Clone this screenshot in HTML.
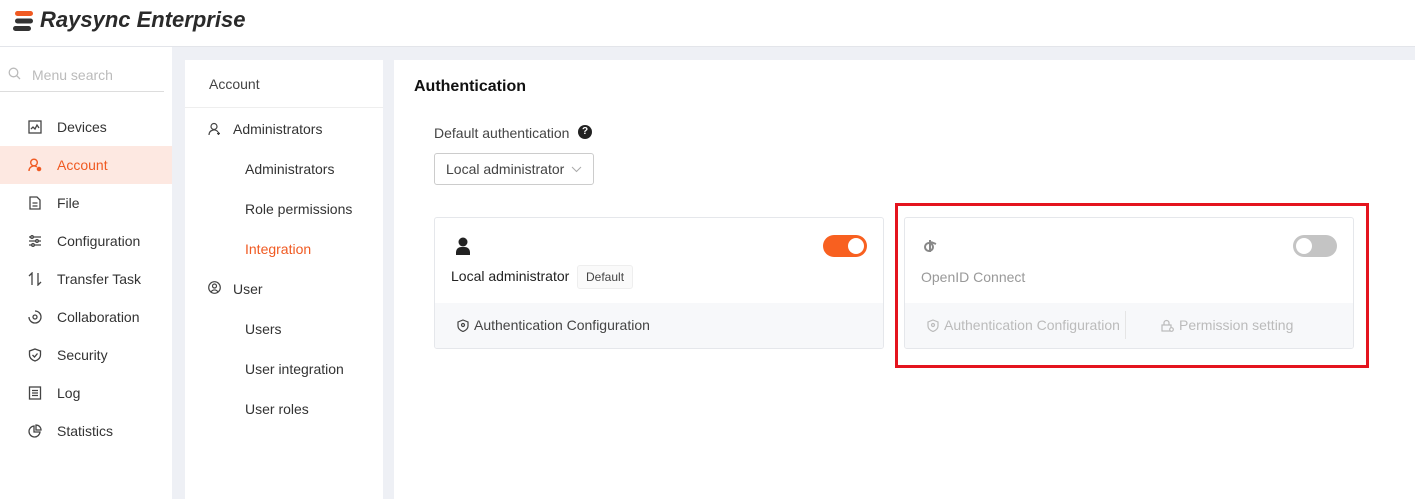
<html><head><style>
body{margin:0;width:1415px;height:499px;background:#eef0f5;font-family:"Liberation Sans",sans-serif;position:relative;overflow:hidden;font-size:14px;color:#333}
.a{position:absolute}
.hd{left:0;top:0;width:1415px;height:46px;background:#fff;border-bottom:1px solid #e3e5ea}
.sb{left:0;top:47px;width:172px;height:452px;background:#fff}
.mi{position:absolute;left:0;width:172px;height:38px;line-height:38px}
.mi span{position:absolute;left:57px}
.mi svg{position:absolute;left:28px;top:12px}
.mp{left:185px;top:60px;width:198px;height:439px;background:#fff}
.rp{left:394px;top:60px;width:1021px;height:439px;background:#fff}
.card{position:absolute;top:217px;width:450px;height:132px;border:1px solid #e5e7eb;border-radius:3px;background:#fff;box-sizing:border-box;overflow:hidden}
.ft{position:absolute;left:0;right:0;bottom:0;height:45px;background:#f7f8fa;line-height:45px}
</style></head><body>
<div class="a hd">
<svg class="a" style="left:12px;top:10px" width="24" height="22" viewBox="0 0 24 22"><rect x="3" y="1" width="18" height="5" rx="2.5" fill="#f05a22"/><rect x="3" y="8.5" width="18" height="5" rx="2.5" fill="#333"/><rect x="1" y="16" width="18" height="5" rx="2.5" fill="#333"/></svg>
<div class="a" style="left:40px;top:7px;font-size:22px;font-weight:bold;font-style:italic;color:#2a2a2a">Raysync Enterprise</div>
</div>
<div class="a sb">
<svg class="a" style="left:8px;top:20px" width="13" height="13" viewBox="0 0 13 13"><circle cx="5.5" cy="5.5" r="4.3" fill="none" stroke="#bbb" stroke-width="1.3"/><path d="M8.7 8.7l3.3 3.3" stroke="#bbb" stroke-width="1.3"/></svg>
<div class="a" style="left:32px;top:20px;color:#bbb;font-size:14px">Menu search</div>
<div class="a" style="left:0;top:44px;width:164px;border-top:1px solid #ddd"></div>
<div class="mi" style="top:61px"><svg width="14" height="14" viewBox="0 0 14 14" fill="none" stroke="#444" stroke-width="1.3"><rect x="1" y="1" width="12" height="12"/><path d="M3 9l2-2 2 2 2-4 2 3"/></svg><span>Devices</span></div>
<div class="mi" style="top:99px;background:#fde8e1;color:#f05a22"><svg width="14" height="14" viewBox="0 0 14 14" fill="none" stroke="#f05a22" stroke-width="1.4"><circle cx="6" cy="4.5" r="3.3"/><path d="M1 13a5 5 0 0 1 8-4"/><circle cx="11" cy="11" r="1.6" fill="#f05a22"/></svg><span>Account</span></div>
<div class="mi" style="top:137px"><svg width="14" height="14" viewBox="0 0 14 14" fill="none" stroke="#444" stroke-width="1.3"><path d="M2 1h7l3 3v9H2zM4.5 7h5M4.5 10h5"/></svg><span>File</span></div>
<div class="mi" style="top:175px"><svg width="14" height="14" viewBox="0 0 14 14" fill="none" stroke="#444" stroke-width="1.3"><path d="M1 3h12M1 7h12M1 11h12"/><circle cx="4" cy="3" r="1.3" fill="#fff"/><circle cx="9" cy="7" r="1.3" fill="#fff"/><circle cx="5" cy="11" r="1.3" fill="#fff"/></svg><span>Configuration</span></div>
<div class="mi" style="top:213px"><svg width="14" height="14" viewBox="0 0 14 14" fill="none" stroke="#444" stroke-width="1.3"><path d="M4 13V1L1 4M10 1v12l3-3"/></svg><span>Transfer Task</span></div>
<div class="mi" style="top:251px"><svg width="14" height="14" viewBox="0 0 14 14" fill="none" stroke="#444" stroke-width="1.3"><path d="M7 1a6 6 0 1 1-6 6"/><circle cx="7" cy="7" r="2"/></svg><span>Collaboration</span></div>
<div class="mi" style="top:289px"><svg width="14" height="14" viewBox="0 0 14 14" fill="none" stroke="#444" stroke-width="1.3"><path d="M7 1l5.5 2v4c0 3-2.5 5-5.5 6-3-1-5.5-3-5.5-6V3z"/><path d="M4.5 7l2 2 3-3.5"/></svg><span>Security</span></div>
<div class="mi" style="top:327px"><svg width="14" height="14" viewBox="0 0 14 14" fill="none" stroke="#444" stroke-width="1.3"><rect x="1.5" y="1" width="11" height="12"/><path d="M4 4.5h6M4 7h6M4 9.5h6"/></svg><span>Log</span></div>
<div class="mi" style="top:365px"><svg width="14" height="14" viewBox="0 0 14 14" fill="none" stroke="#444" stroke-width="1.3"><path d="M6 2a5.5 5.5 0 1 0 6 6H6z"/><path d="M8 1v5h5A5 5 0 0 0 8 1z"/></svg><span>Statistics</span></div>
</div>
<div class="a mp">
<div class="a" style="left:24px;top:16px;color:#444">Account</div>
<div class="a" style="left:0;top:47px;width:198px;border-top:1px solid #eee"></div>
<svg class="a" style="left:23px;top:62px" width="14" height="14" viewBox="0 0 14 14" fill="none" stroke="#444" stroke-width="1.2"><circle cx="6" cy="4.5" r="3"/><path d="M1 13a5 5 0 0 1 9-3"/><path d="M10.5 10v3M9 11.5h3"/></svg>
<div class="a" style="left:48px;top:61px">Administrators</div>
<div class="a" style="left:60px;top:101px">Administrators</div>
<div class="a" style="left:60px;top:141px">Role permissions</div>
<div class="a" style="left:60px;top:181px;color:#f05a22">Integration</div>
<svg class="a" style="left:23px;top:221px" width="13" height="13" viewBox="0 0 13 13" fill="none" stroke="#444" stroke-width="1.2"><circle cx="6.5" cy="6.5" r="5.8"/><circle cx="6.5" cy="5" r="2"/><path d="M3 11a4 4 0 0 1 7 0"/></svg>
<div class="a" style="left:48px;top:221px">User</div>
<div class="a" style="left:60px;top:261px">Users</div>
<div class="a" style="left:60px;top:301px">User integration</div>
<div class="a" style="left:60px;top:341px">User roles</div>
</div>
<div class="a rp">
<div class="a" style="left:20px;top:18px;font-size:16px;font-weight:bold;color:#111">Authentication</div>
<div class="a" style="left:40px;top:65px;color:#444">Default authentication</div>
<div class="a" style="left:184px;top:65px;width:14px;height:14px;border-radius:50%;background:#222;color:#fff;font-size:10px;text-align:center;line-height:14px;font-weight:bold">?</div>
<div class="a" style="left:40px;top:93px;width:160px;height:32px;border:1px solid #ccc;border-radius:3px;line-height:30px;box-sizing:border-box;padding-left:11px;color:#444">Local administrator</div>
<svg class="a" style="left:177px;top:106px" width="11" height="7" viewBox="0 0 11 7"><path d="M1 1l4.5 4.5L10 1" fill="none" stroke="#aaa" stroke-width="1"/></svg>
</div>
<div class="card" style="left:434px">
<svg class="a" style="left:21px;top:19px" width="14" height="18" viewBox="0 0 14 18"><circle cx="7" cy="5" r="4.5" fill="#222"/><path d="M0 18v-3a5 5 0 0 1 5-5h4a5 5 0 0 1 5 5v3z" fill="#222"/></svg>
<div class="a" style="left:388px;top:17px;width:44px;height:22px;border-radius:11px;background:#f86020"><div class="a" style="right:3px;top:3px;width:16px;height:16px;border-radius:50%;background:#fff"></div></div>
<div class="a" style="left:16px;top:50px;color:#222">Local administrator</div>
<div class="a" style="left:142px;top:47px;height:22px;line-height:22px;padding:0 8px;border:1px solid #eee;background:#fafafa;border-radius:3px;font-size:12px;color:#444">Default</div>
<div class="ft"><svg class="a" style="left:22px;top:16px" width="12" height="13" viewBox="0 0 12 13" fill="none" stroke="#444" stroke-width="1.2"><path d="M6 1l5 2v4c0 3-2.5 4.5-5 5.5C3.5 11.5 1 10 1 7V3z"/><circle cx="6" cy="6" r="1.5"/></svg><span style="position:absolute;left:39px;color:#444">Authentication Configuration</span></div>
</div>
<div class="card" style="left:904px;color:#aaa">
<svg class="a" style="left:18px;top:21px" width="18" height="14" viewBox="0 0 18 14" fill="none" stroke="#888" stroke-width="2"><circle cx="6" cy="8" r="4"/><path d="M7 1v12M8 3l5 2"/></svg>
<div class="a" style="left:388px;top:17px;width:44px;height:22px;border-radius:11px;background:#c4c4c4"><div class="a" style="left:3px;top:3px;width:16px;height:16px;border-radius:50%;background:#fff"></div></div>
<div class="a" style="left:16px;top:51px;color:#999">OpenID Connect</div>
<div class="ft" style="color:#bbb"><svg class="a" style="left:22px;top:16px" width="12" height="13" viewBox="0 0 12 13" fill="none" stroke="#bbb" stroke-width="1.2"><path d="M6 1l5 2v4c0 3-2.5 4.5-5 5.5C3.5 11.5 1 10 1 7V3z"/><circle cx="6" cy="6" r="1.5"/></svg><span class="a" style="left:39px">Authentication Configuration</span><div class="a" style="left:220px;top:8px;height:28px;border-left:1px solid #e5e5e5"></div><svg class="a" style="left:256px;top:16px" width="13" height="13" viewBox="0 0 13 13" fill="none" stroke="#bbb" stroke-width="1.2"><rect x="1" y="6" width="9" height="6"/><path d="M3 6V4a2.5 2.5 0 0 1 5 0v2"/><circle cx="10.5" cy="10.5" r="1.8" fill="#fff"/></svg><span class="a" style="left:274px">Permission setting</span></div>
</div>
<div class="a" style="left:895px;top:203px;width:474px;height:165px;border:3px solid #e4141e;box-sizing:border-box"></div>
</body></html>
